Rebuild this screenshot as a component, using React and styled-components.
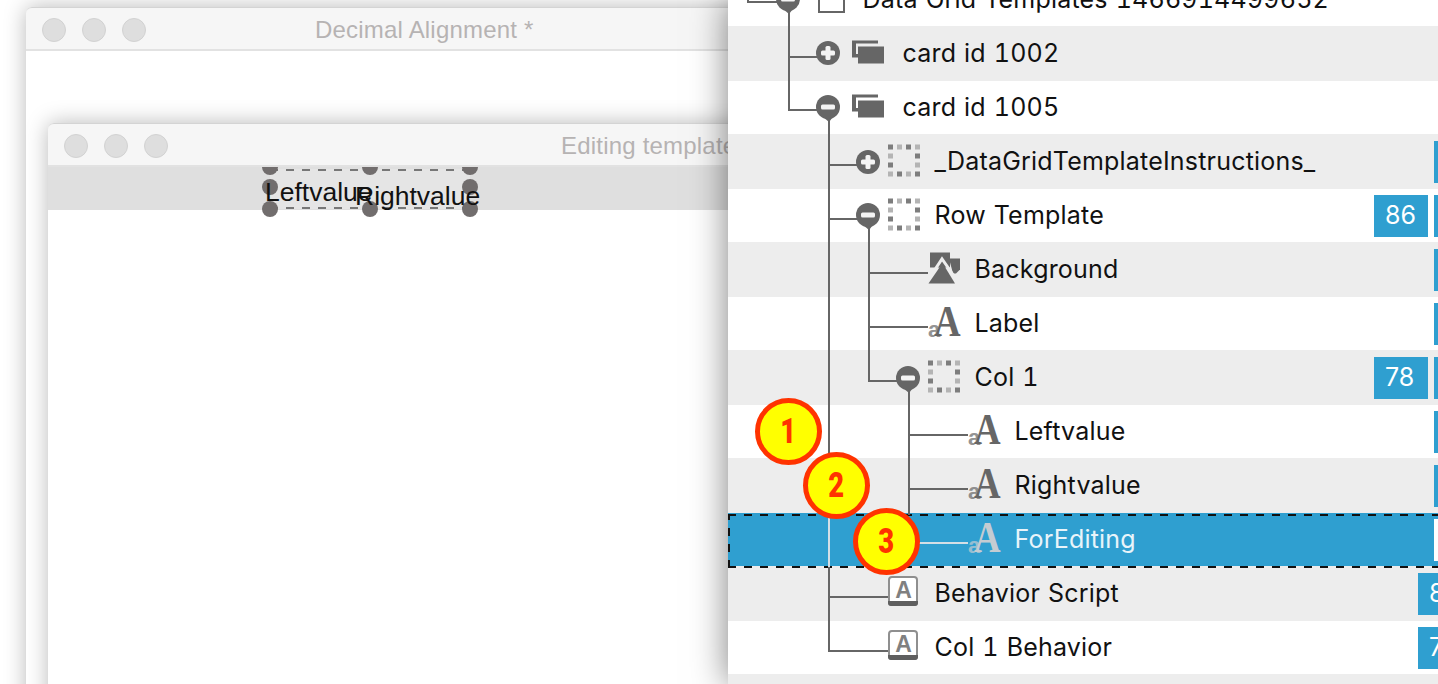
import React from "react"
import styled, { createGlobalStyle } from "styled-components"

const GlobalStyle = createGlobalStyle`
  html, body {
    margin: 0;
    height: 100%;
    overflow: hidden;
    background: #fff;
  }
`

const Screen = styled.div`
  display: flex;
  width: 1438px;
  height: 684px;
  overflow: hidden;
`

const Desktop = styled.div`
  flex: 0 0 728px;
  height: 684px;
  overflow: hidden;
  box-sizing: border-box;
  padding: 7px 0 0 26px;
`

const Window = styled.div`
  width: ${(p) => p.$width}px;
  height: 900px;
  background: #fff;
  border-radius: 6px 6px 0 0;
  box-shadow: 0 0 22px rgba(0, 0, 0, 0.28);
`

const TitleBar = styled.div`
  display: flex;
  align-items: center;
  box-sizing: border-box;
  height: 44px;
  padding: 3px 0 0 16px;
  background: #f6f6f6;
  border-top: 1px solid #d4d4d4;
  border-bottom: 2px solid #e2e2e2;
  border-radius: 6px 6px 0 0;
`

const Lights = styled.div`
  display: flex;
  gap: 16px;
`

const Light = styled.span`
  width: 24px;
  height: 24px;
  box-sizing: border-box;
  border-radius: 50%;
  background: #dedede;
  border: 1px solid #d2d2d2;
`

const Title = styled.div`
  margin-left: ${(p) => p.$offset}px;
  font: 24px "Liberation Sans", sans-serif;
  letter-spacing: 0.2px;
  color: #b6b3b3;
  white-space: nowrap;
`

const OuterBody = styled.div`
  padding: 72px 0 0 22px;
`

const TemplateRow = styled.div`
  position: relative;
  height: 43px;
  background: #dfdfdf;
`

const Selection = styled.div`
  position: absolute;
  left: 222px;
  top: 0;
  width: 200px;
  height: 43px;
  clip-path: inset(0 -20px -20px -20px);
`

const SelectionFrame = styled.div`
  position: absolute;
  inset: 2px 0 1px 0;
  background:
    repeating-linear-gradient(90deg, #777 0 8px, transparent 8px 16px) top / 100% 2px no-repeat,
    repeating-linear-gradient(90deg, #777 0 8px, transparent 8px 16px) bottom / 100% 2px no-repeat,
    #e5e5e5;
`

const Handle = styled.span`
  position: absolute;
  left: ${(p) => p.$x - 8}px;
  top: ${(p) => p.$y - 8}px;
  width: 16px;
  height: 16px;
  border-radius: 50%;
  background: #716d6d;
`

const FieldText = styled.span`
  position: absolute;
  left: ${(p) => p.$x}px;
  top: ${(p) => p.$y}px;
  font: 26.5px/30px "Liberation Sans", sans-serif;
  color: #111;
  white-space: nowrap;
`

const Panel = styled.div`
  position: relative;
  z-index: 1;
  flex: 0 0 710px;
  height: 684px;
  overflow: hidden;
  background: #ededed;
  box-shadow: 0 0 34px rgba(0, 0, 0, 0.5);
`

const RowList = styled.div`
  margin-top: -27px;
`

const Row = styled.div`
  position: relative;
  display: flex;
  align-items: center;
  box-sizing: border-box;
  width: 760px;
  height: ${(p) => (p.$alt ? 55 : 53)}px;
  padding-left: ${(p) => p.$indent}px;
  background: ${(p) => (p.$selected ? "#2f9fd0" : p.$alt ? "#ededed" : "#fff")};
  z-index: ${(p) => (p.$selected ? 1 : 0)};

  ${(p) =>
    p.$selected &&
    `&::after {
      content: "";
      position: absolute;
      inset: 1px 0 -2px 0;
      background:
        repeating-linear-gradient(90deg, #111 0 8px, transparent 8px 16px) top / 100% 2px no-repeat,
        repeating-linear-gradient(90deg, #111 0 8px, transparent 8px 16px) bottom / 100% 2px no-repeat,
        repeating-linear-gradient(0deg, #111 0 8px, transparent 8px 16px) left / 2px 100% no-repeat;
    }`}
`

const IconSlot = styled.div`
  flex: 0 0 ${(p) => (p.$wide ? 36 : 32)}px;
  height: 32px;
  margin-right: 14.5px;
  color: ${(p) => (p.$selected ? "#c4ccd2" : "#666")};

  svg {
    display: block;
    overflow: visible;
  }
`

const Label = styled.div`
  padding-bottom: 2px;
  font: 25px "Inter", sans-serif;
  font-variant-numeric: tabular-nums;
  letter-spacing: 0.2px;
  word-spacing: 1px;
  color: ${(p) => (p.$selected ? "#e8f4fa" : "#111")};
  white-space: nowrap;
`

const Trail = styled.div`
  display: flex;
  gap: 6px;
  margin-left: auto;
  margin-right: ${(p) => (p.$shift ? 16 : 0)}px;
`

const Badge = styled.div`
  box-sizing: border-box;
  width: 54px;
  height: 42px;
  padding-left: 11px;
  background: ${(p) => (p.$white ? "#fff" : "#2f9fd0")};
  font: 25px/41px "Inter", sans-serif;
  color: #fff;
`

const TreeLines = styled.svg`
  position: absolute;
  left: 0;
  top: 0;
  z-index: 2;
  pointer-events: none;
`

const Marker = styled.div`
  position: absolute;
  left: ${(p) => p.$x - 33.5}px;
  top: ${(p) => p.$y - 33.5}px;
  z-index: 3;
  display: flex;
  align-items: center;
  justify-content: center;
  box-sizing: border-box;
  width: 67px;
  height: 67px;
  border: 5px solid #ff3300;
  border-radius: 50%;
  background: #ffff00;
  font: 900 35px "Roboto", sans-serif;
  color: #ff3300;
`

const MarkerDigit = styled.span`
  display: block;
  transform: scaleX(0.78);
`

const FolderIcon = () => (
  <svg width="36" height="32" viewBox="0 0 36 32">
    <path d="M0 2.5h26v3H4V16H6v3.5H0z" fill="currentColor" />
    <rect x="6" y="8.5" width="26" height="17" fill="currentColor" />
  </svg>
)

const DocIcon = () => (
  <svg width="36" height="32" viewBox="0 0 36 32">
    <path d="M2 -4V8h5" fill="none" stroke="#666" strokeWidth="2" />
    <rect x="7" y="0" width="25" height="28" fill="#fff" stroke="#666" strokeWidth="2" />
  </svg>
)

const dotSteps = [0, 9, 18, 27]

const GroupIcon = () => (
  <svg width="32" height="32" viewBox="0 0 32 32">
    {dotSteps.map((x, i) =>
      dotSteps.map((y, j) =>
        i === 0 || i === 3 || j === 0 || j === 3 ? (
          <rect key={`${x}-${y}`} x={x} y={y - 1.5} width="5" height="5" fill={(i + j) % 2 ? "#b4b4b4" : "#7d7d7d"} />
        ) : null
      )
    )}
  </svg>
)

const ImageIcon = () => (
  <svg width="32" height="32" viewBox="0 0 32 32">
    <rect x="2" y="-1.5" width="20" height="15" fill="currentColor" />
    <path d="M21 4.5h11v11l-4 4h-3z" fill="currentColor" />
    <path d="M0 26L14 5l14 20" fill="none" stroke="#ededed" strokeWidth="3" />
    <path d="M14.5 9L0.5 29.5H27z" fill="currentColor" />
  </svg>
)

const TextIcon = () => (
  <svg width="32" height="32" viewBox="0 0 32 32">
    <text transform="translate(6 28) scale(0.82 1)" fontFamily="Liberation Serif" fontWeight="700" fontSize="45" fill="currentColor">A</text>
    <text x="0" y="28.5" fontFamily="Liberation Sans" fontWeight="700" fontSize="22" fill="currentColor" opacity="0.7">a</text>
  </svg>
)

const ScriptIcon = () => (
  <svg width="32" height="32" viewBox="0 0 32 32">
    <rect x="1" y="-1" width="28" height="28" rx="3" fill="#fff" stroke="#8f8f8f" strokeWidth="2" />
    <path d="M0 23h30v2a3 3 0 0 1-3 3H3a3 3 0 0 1-3-3z" fill="#5f5f5f" />
    <text x="15.5" y="19.5" textAnchor="middle" fontFamily="Liberation Sans" fontWeight="700" fontSize="23" fill="#808080">A</text>
  </svg>
)

const icons = {
  folder: FolderIcon,
  doc: DocIcon,
  group: GroupIcon,
  image: ImageIcon,
  text: TextIcon,
  script: ScriptIcon,
}

const rows = [
  { label: "Data Grid Templates 1466914499652", indent: 84, icon: "doc" },
  { label: "card id 1002", indent: 124, icon: "folder" },
  { label: "card id 1005", indent: 124, icon: "folder" },
  { label: "_DataGridTemplateInstructions_", indent: 160, icon: "group", slim: true },
  { label: "Row Template", indent: 160, icon: "group", slim: true, count: "86" },
  { label: "Background", indent: 200, icon: "image", slim: true },
  { label: "Label", indent: 200, icon: "text", slim: true },
  { label: "Col 1", indent: 200, icon: "group", slim: true, count: "78" },
  { label: "Leftvalue", indent: 240, icon: "text", slim: true },
  { label: "Rightvalue", indent: 240, icon: "text", slim: true },
  { label: "ForEditing", indent: 240, icon: "text", slim: true, selected: true },
  { label: "Behavior Script", indent: 160, icon: "script", shifted: "8" },
  { label: "Col 1 Behavior", indent: 160, icon: "script", shifted: "7" },
  { empty: true },
]

const Toggle = ({ x, y, open }) => (
  <g>
    {open && <path d={`M${x - 5} ${y + 10}L${x + 1} ${y + 15}L${x + 5} ${y + 10}z`} fill="#666" />}
    <circle cx={x} cy={y} r="12" fill="#666" />
    <rect x={x - 7} y={y - 2.5} width="14" height="5" rx="1.5" fill="#f4f4f4" />
    {!open && <rect x={x - 2.5} y={y - 7} width="5" height="14" rx="1.5" fill="#f4f4f4" />}
  </g>
)

const Tree = () => (
  <TreeLines width="710" height="684" viewBox="728 0 710 684">
    <g fill="none" stroke="#666" strokeWidth="2">
      <path d="M748 0V2H780" />
      <path d="M789 10V110H820M789 57H820" />
      <path d="M829 118V515M829 567V651H888M829 165H860M829 219H860M829 597H888" />
      <path d="M869 225V381H900M869 273H928M869 327H928" />
      <path d="M909 385V515M909 435H968M909 489H968" />
      <path d="M829 515V567M918 543H968" stroke="#d4dfe6" />
    </g>
    <Toggle x={788} y={-1} open />
    <Toggle x={828} y={53} />
    <Toggle x={828} y={107} open />
    <Toggle x={868} y={162} />
    <Toggle x={868} y={215} open />
    <Toggle x={908} y={378} open />
  </TreeLines>
)

const handles = [
  [0, 0], [100, 0], [200, 0],
  [0, 20], [200, 20],
  [0, 42], [100, 42], [200, 42],
]

export default function App() {
  return (
    <Screen>
      <GlobalStyle />
      <Desktop>
        <Window $width={796}>
          <TitleBar>
            <Lights><Light /><Light /><Light /></Lights>
            <Title $offset={169}>Decimal Alignment *</Title>
          </TitleBar>
          <OuterBody>
            <Window $width={900}>
              <TitleBar>
                <Lights><Light /><Light /><Light /></Lights>
                <Title $offset={393}>Editing template</Title>
              </TitleBar>
              <TemplateRow>
                <Selection>
                  <SelectionFrame />
                  {handles.map(([x, y]) => (
                    <Handle key={`${x}-${y}`} $x={x} $y={y} />
                  ))}
                  <FieldText $x={-5} $y={10}>Leftvalue</FieldText>
                  <FieldText $x={85} $y={14}>Rightvalue</FieldText>
                </Selection>
              </TemplateRow>
            </Window>
          </OuterBody>
        </Window>
      </Desktop>
      <Panel>
        <RowList>
          {rows.map((row, i) => {
            const Icon = icons[row.icon]
            return (
              <Row key={i} $alt={i % 2 === 1} $indent={row.indent} $selected={row.selected}>
                {!row.empty && (
                  <>
                    <IconSlot $wide={row.icon === "folder" || row.icon === "doc"} $selected={row.selected}>
                      <Icon />
                    </IconSlot>
                    <Label $selected={row.selected}>{row.label}</Label>
                  </>
                )}
                {row.slim && (
                  <Trail>
                    {row.count && <Badge>{row.count}</Badge>}
                    <Badge $white={row.selected} />
                  </Trail>
                )}
                {row.shifted && (
                  <Trail $shift>
                    <Badge>{row.shifted}</Badge>
                  </Trail>
                )}
              </Row>
            )
          })}
        </RowList>
        <Tree />
        <Marker $x={60} $y={431.5}><MarkerDigit>1</MarkerDigit></Marker>
        <Marker $x={108} $y={485}><MarkerDigit>2</MarkerDigit></Marker>
        <Marker $x={158} $y={541}><MarkerDigit>3</MarkerDigit></Marker>
      </Panel>
    </Screen>
  )
}
